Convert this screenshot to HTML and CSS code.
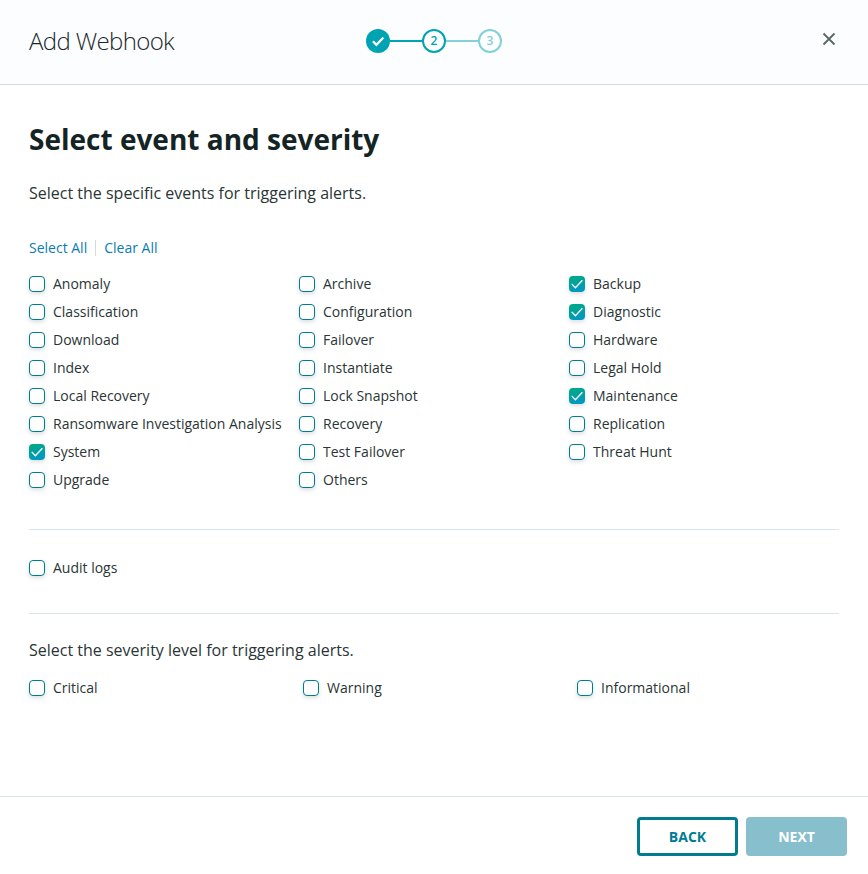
FILE: index.html
```html
<!DOCTYPE html>
<html lang="en">
<head>
<meta charset="utf-8">
<title>Add Webhook</title>
<link rel="stylesheet" href="styles.css">
</head>
<body>
<svg class="defs" width="0" height="0" aria-hidden="true">
  <symbol id="tick" viewBox="0 0 16 16"><path d="M2.7 7.9 6.4 11.7 13.4 4.3" fill="none" stroke="#fff" stroke-width="1.3"/></symbol>
</svg>
<div class="dialog">
  <header class="header">
    <h1 class="title">Add Webhook</h1>
    <div class="steps">
      <span class="step done"><svg width="24" height="24" viewBox="0 0 24 24"><path d="M6.9 12.3 10.4 15.8 17.4 8.5" fill="none" stroke="#fff" stroke-width="2.3"/></svg></span>
      <span class="line"></span>
      <span class="step">2</span>
      <span class="line pale"></span>
      <span class="step next">3</span>
    </div>
    <button class="close" aria-label="Close"><svg width="14" height="14" viewBox="0 0 14 14"><path d="M1.5 1.5 12.5 12.5M12.5 1.5 1.5 12.5" stroke="#5b6868" stroke-width="1.9"/></svg></button>
  </header>
  <main class="content">
    <h2 class="heading">Select event and severity</h2>
    <p class="intro">Select the specific events for triggering alerts.</p>
    <div class="links"><a>Select All</a><span class="sep"></span><a>Clear All</a></div>
    <div class="events">
      <label class="check"><span class="box"></span>Anomaly</label>
      <label class="check"><span class="box"></span>Archive</label>
      <label class="check"><span class="box on"><svg width="16" height="16"><use href="#tick"/></svg></span>Backup</label>
      <label class="check"><span class="box"></span>Classification</label>
      <label class="check"><span class="box"></span>Configuration</label>
      <label class="check"><span class="box on"><svg width="16" height="16"><use href="#tick"/></svg></span>Diagnostic</label>
      <label class="check"><span class="box"></span>Download</label>
      <label class="check"><span class="box"></span>Failover</label>
      <label class="check"><span class="box"></span>Hardware</label>
      <label class="check"><span class="box"></span>Index</label>
      <label class="check"><span class="box"></span>Instantiate</label>
      <label class="check"><span class="box"></span>Legal Hold</label>
      <label class="check"><span class="box"></span>Local Recovery</label>
      <label class="check"><span class="box"></span>Lock Snapshot</label>
      <label class="check"><span class="box on"><svg width="16" height="16"><use href="#tick"/></svg></span>Maintenance</label>
      <label class="check"><span class="box"></span>Ransomware Investigation Analysis</label>
      <label class="check"><span class="box"></span>Recovery</label>
      <label class="check"><span class="box"></span>Replication</label>
      <label class="check"><span class="box on"><svg width="16" height="16"><use href="#tick"/></svg></span>System</label>
      <label class="check"><span class="box"></span>Test Failover</label>
      <label class="check"><span class="box"></span>Threat Hunt</label>
      <label class="check"><span class="box"></span>Upgrade</label>
      <label class="check"><span class="box"></span>Others</label>
    </div>
    <div class="audit"><label class="check"><span class="box"></span>Audit logs</label></div>
    <p class="severity-text">Select the severity level for triggering alerts.</p>
    <div class="severity">
      <label class="check"><span class="box"></span>Critical</label>
      <label class="check"><span class="box"></span>Warning</label>
      <label class="check"><span class="box"></span>Informational</label>
    </div>
  </main>
  <footer class="footer">
    <button class="btn back">BACK</button>
    <button class="btn primary">NEXT</button>
  </footer>
</div>
</body>
</html>
```
FILE: styles.css
```css
* { box-sizing: border-box; }
body {
  margin: 0;
  background: #fff;
  color: #2a3535;
  font: 14px/20px "Open Sans", "Noto Sans", sans-serif;
}
.defs { display: block; }
.dialog {
  display: flex;
  flex-direction: column;
  height: 874px;
}
.header {
  display: grid;
  grid-template-columns: 1fr auto 1fr;
  align-items: center;
  height: 85px;
  padding: 0 32px 2px 29px;
  background: #fcfdff;
  border-bottom: 1px solid #cddde8;
}
.title {
  margin: 0;
  color: #1a2929;
  font-size: 24px;
  font-weight: 300;
  letter-spacing: -.63px;
  line-height: 32px;
}
.steps { display: flex; align-items: center; margin-left: 3px; }
.step {
  display: flex;
  align-items: center;
  justify-content: center;
  width: 24px;
  height: 24px;
  border: 2px solid #00a3b1;
  border-radius: 50%;
  background: #fff;
  color: #00a3b1;
  font-size: 12px;
  font-weight: 600;
}
.step.done { border: 0; background: #00a3b1; }
.step.next { border-color: #80d1d8; color: #80d1d8; }
.line { width: 32px; height: 2px; background: #00a3b1; }
.line.pale { background: #80d1d8; }
.close {
  justify-self: end;
  display: flex;
  padding: 0;
  border: 0;
  background: none;
  margin-top: -4px;
}
.content { flex: 1; padding: 34px 29px 0; }
.heading {
  margin: 0;
  color: #142424;
  font-size: 28px;
  font-weight: 700;
  line-height: 40px;
}
.intro { margin: 22px 0 0; font-size: 16px; line-height: 24px; }
.links {
  display: flex;
  align-items: center;
  height: 20px;
  margin-top: 33px;
  color: #0b7cb3;
}
.sep { width: 1px; height: 16px; margin: 0 8px; background: #cddde8; }
.events {
  display: grid;
  grid-template-columns: repeat(3, 1fr);
  row-gap: 8px;
  margin-top: 16px;
}
.check { display: flex; align-items: center; height: 20px; white-space: nowrap; }
.box {
  flex: none;
  width: 16px;
  height: 16px;
  margin-right: 8px;
  border: 1px solid #007c91;
  border-radius: 4px;
  background: #fff;
  box-shadow: 0 2px 4px rgba(40, 60, 70, .17);
}
.box.on { border: 0; background: linear-gradient(160deg, #00a886 10%, #0096cc 100%); }
.box svg { display: block; }
.audit {
  display: flex;
  align-items: center;
  height: 85px;
  margin-top: 39px;
  padding-bottom: 7px;
  border-top: 1px solid #dae5ea;
  border-bottom: 1px solid #dae5ea;
}
.severity-text { margin: 24px 0 0; font-size: 16px; line-height: 24px; }
.severity {
  display: grid;
  grid-template-columns: repeat(3, 1fr);
  column-gap: 12px;
  margin-top: 16px;
}
.footer {
  display: flex;
  justify-content: flex-end;
  gap: 8px;
  height: 78px;
  padding: 20px 21px 0;
  border-top: 1px solid #d5e6ea;
}
.btn {
  width: 101px;
  height: 39px;
  padding: 0;
  border: 0;
  border-radius: 4px;
  font: 700 14px/20px "Open Sans", sans-serif;
}
.back { border: 3px solid #007c91; background: #fff; color: #007c91; }
.primary { background: #87bfcc; color: #fff; }
```
